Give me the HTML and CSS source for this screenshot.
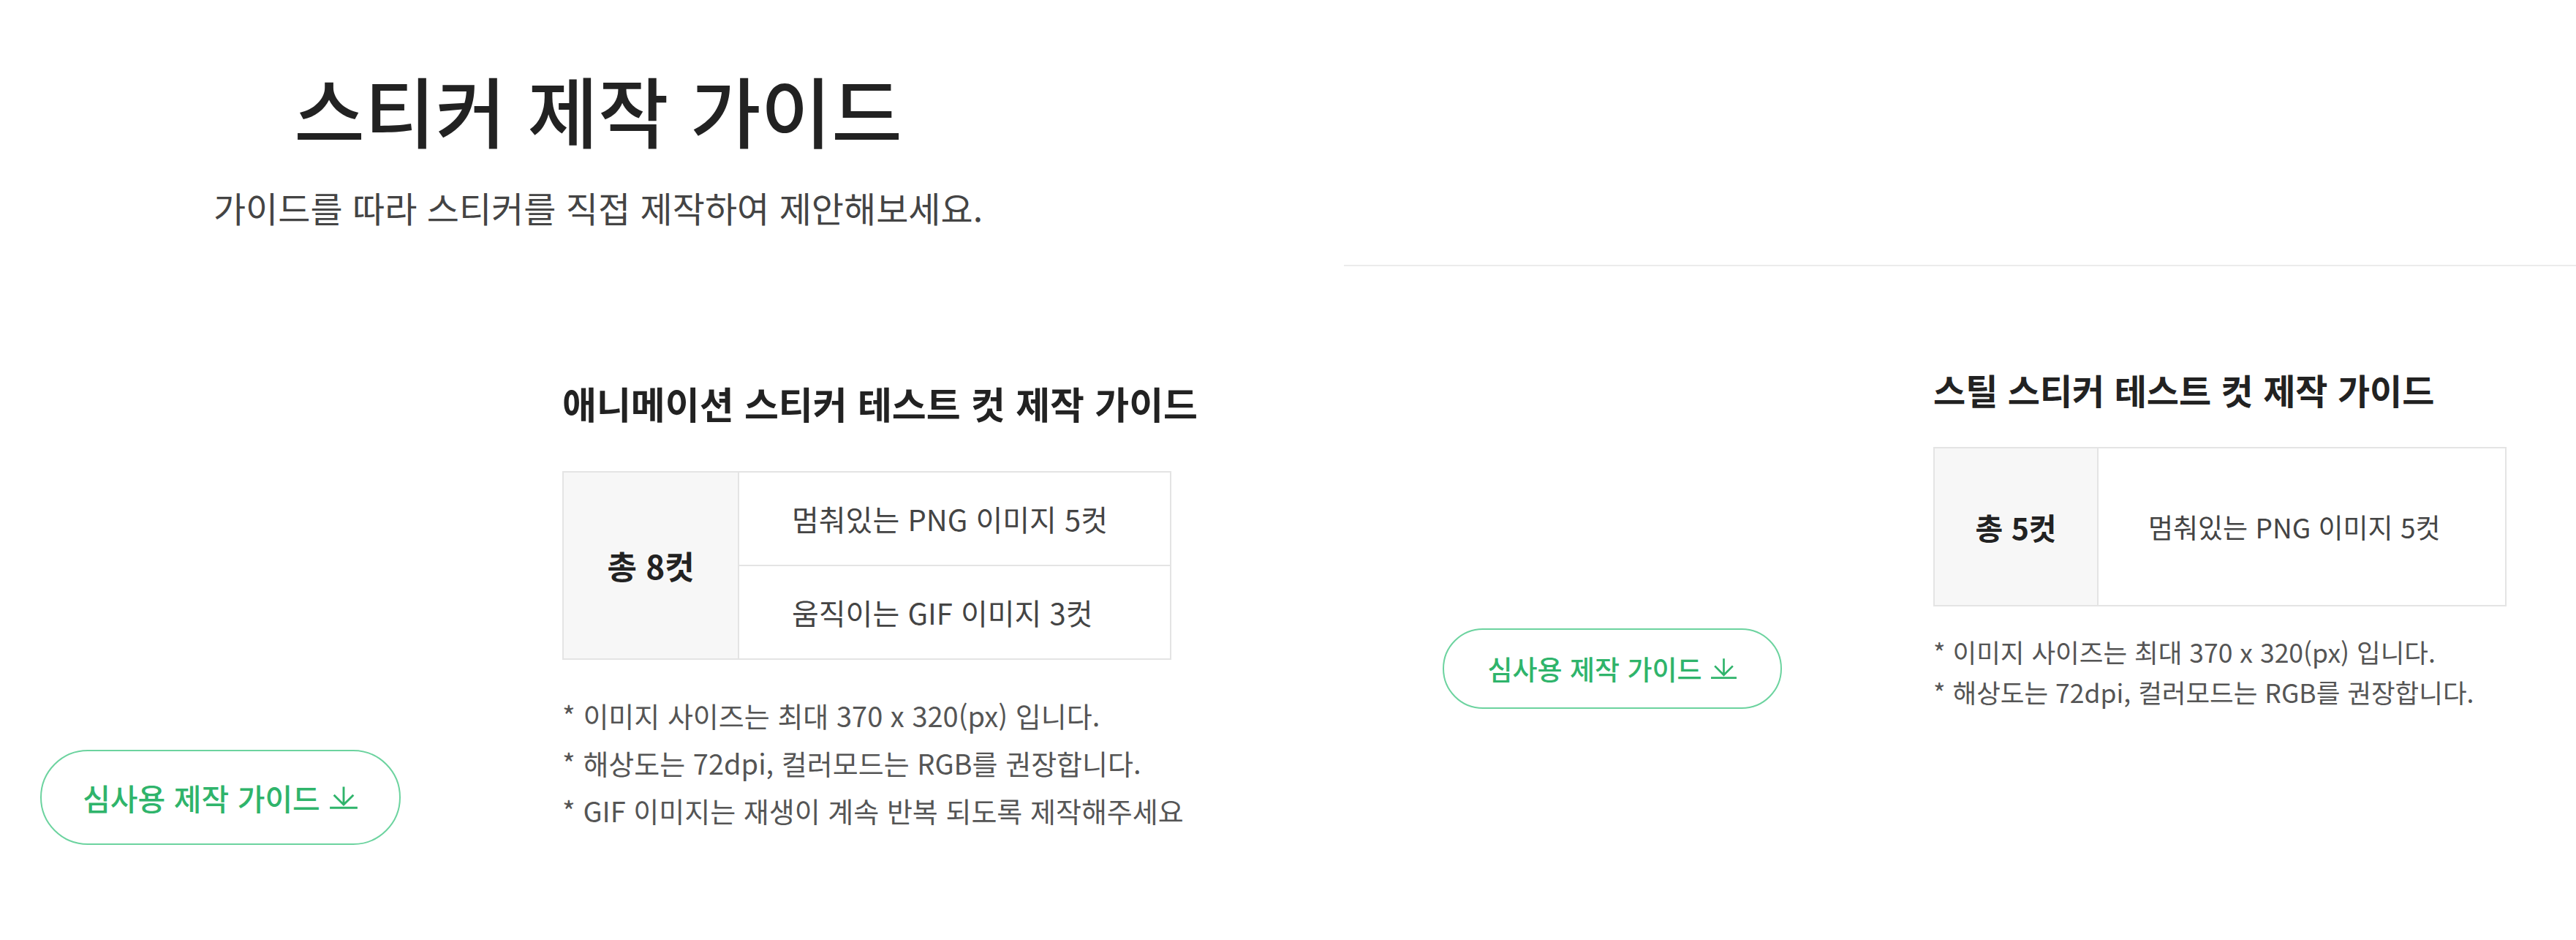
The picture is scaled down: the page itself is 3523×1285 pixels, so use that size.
FILE: index.html
```html
<!DOCTYPE html>
<html lang="ko">
<head>
    <meta charset="UTF-8">
    <meta name="viewport" content="width=device-width, initial-scale=1.0">
    <title>스티커 제작 가이드</title>
    <link rel="stylesheet" href="styles.css">
</head>
<body>
    <div class="page">
        <!-- animation sticker guide -->
        <section class="panel panel-main">
            <header class="intro">
                <h1 class="intro-title">스티커 제작 가이드</h1>
                <p class="intro-desc">가이드를 따라 스티커를 직접 제작하여 제안해보세요.</p>
            </header>

            <div class="guide-row">
                <a class="btn-guide" href="#">
                    <span>심사용 제작 가이드</span>
                    <svg viewBox="0 0 36 28" fill="none" stroke="currentColor" stroke-width="2.4">
                        <path d="M18 1 V23 M6 11 L18 23 L30 11 M1 26.8 H35"/>
                    </svg>
                </a>
                <div class="guide-block">
                    <h2 class="guide-title">애니메이션 스티커 테스트 컷 제작 가이드</h2>
                    <table class="spec">
                        <tr>
                            <th rowspan="2">총 8컷</th>
                            <td>멈춰있는 PNG 이미지 5컷</td>
                        </tr>
                        <tr>
                            <td>움직이는 GIF 이미지 3컷</td>
                        </tr>
                    </table>
                    <ul class="notes">
                        <li>* 이미지 사이즈는 최대 370 x 320(px) 입니다.</li>
                        <li>* 해상도는 72dpi, 컬러모드는 RGB를 권장합니다.</li>
                        <li>* GIF 이미지는 재생이 계속 반복 되도록 제작해주세요</li>
                    </ul>
                </div>
            </div>
        </section>

        <!-- still sticker guide -->
        <section class="panel panel-alt">
            <hr class="divider">
            <div class="guide-row">
                <a class="btn-guide" href="#">
                    <span>심사용 제작 가이드</span>
                    <svg viewBox="0 0 36 28" fill="none" stroke="currentColor" stroke-width="2.4">
                        <path d="M18 1 V23 M6 11 L18 23 L30 11 M1 26.8 H35"/>
                    </svg>
                </a>
                <div class="guide-block">
                    <h2 class="guide-title">스틸 스티커 테스트 컷 제작 가이드</h2>
                    <table class="spec">
                        <tr>
                            <th>총 5컷</th>
                            <td>멈춰있는 PNG 이미지 5컷</td>
                        </tr>
                    </table>
                    <ul class="notes">
                        <li>* 이미지 사이즈는 최대 370 x 320(px) 입니다.</li>
                        <li>* 해상도는 72dpi, 컬러모드는 RGB를 권장합니다.</li>
                    </ul>
                </div>
            </div>
        </section>
    </div>
</body>
</html>
```

FILE: styles.css
```css
/* base */
body {
    margin: 0;
    font-family: "Noto Sans CJK KR", "Noto Sans", sans-serif;
    color: #444;
    background-color: #fff;
}

.page {
    display: flex;
    width: 3523px;
}

.panel-main {
    width: 1838px;
    flex-shrink: 0;
}

.panel-alt {
    flex: 1;
    padding-top: 362px;
}

/* intro */
.intro {
    width: 1636px;
    padding-top: 85px;
    text-align: center;
}

.intro-title {
    margin: 0;
    font-size: 105px;
    line-height: 1.2;
    font-weight: 500;
    color: #222;
}

.intro-desc {
    margin: 36px 0 0;
    font-size: 48px;
    line-height: 1.5;
    color: #444;
}

.divider {
    margin: 0;
    border: 0;
    border-top: 2px solid #ebebeb;
}

/* guide row */
.guide-row {
    display: flex;
    align-items: flex-end;
}

.panel-main .guide-row {
    margin-top: 198px;
    padding-left: 55px;
    gap: 221px;
}

.panel-alt .guide-row {
    margin-top: 136px;
    padding-left: 135px;
    gap: 207px;
}

/* download button */
.btn-guide {
    display: flex;
    align-items: center;
    justify-content: center;
    gap: 12px;
    width: 493px;
    height: 130px;
    box-sizing: border-box;
    flex-shrink: 0;
    border: 2px solid #6cd39f;
    border-radius: 999px;
    color: #2fb46b;
    font-size: 41px;
    font-weight: 500;
    text-decoration: none;
}

.btn-guide svg {
    flex-shrink: 0;
    width: 40px;
    height: 32px;
    stroke-width: 2.6;
}

.panel-alt .btn-guide {
    width: 464px;
    height: 110px;
    gap: 11px;
    font-size: 37px;
    margin-bottom: 4px;
}

.panel-alt .btn-guide svg {
    width: 37px;
    height: 29px;
}

/* guide block */
.guide-title {
    margin: 0;
    font-size: 51px;
    line-height: 1.35;
    font-weight: 700;
    color: #222;
    white-space: nowrap;
}

.spec {
    margin-top: 58px;
    width: 833px;
    border-collapse: collapse;
}

.spec th,
.spec td {
    border: 2px solid #e4e4e4;
    padding: 0;
}

.spec th {
    width: 238px;
    background-color: #f7f7f7;
    text-align: center;
    font-size: 44px;
    font-weight: 700;
    color: #222;
}

.spec td {
    height: 126px;
    padding-left: 72px;
    text-align: left;
    font-size: 40px;
    color: #444;
    white-space: nowrap;
}

.notes {
    list-style: none;
    margin: 43px 0 0;
    padding: 0 0 15px;
    font-size: 38px;
    line-height: 65px;
    color: #555;
    white-space: nowrap;
}

.panel-alt .guide-title {
    font-size: 48px;
}

.panel-alt .spec {
    margin-top: 46px;
    width: 784px;
}

.panel-alt .spec th {
    width: 222px;
    font-size: 41px;
}

.panel-alt .spec td {
    height: 214px;
    padding-left: 68px;
    font-size: 37px;
}

.panel-alt .notes {
    margin-top: 34px;
    padding-bottom: 0;
    font-size: 35.5px;
    line-height: 55px;
}
```
